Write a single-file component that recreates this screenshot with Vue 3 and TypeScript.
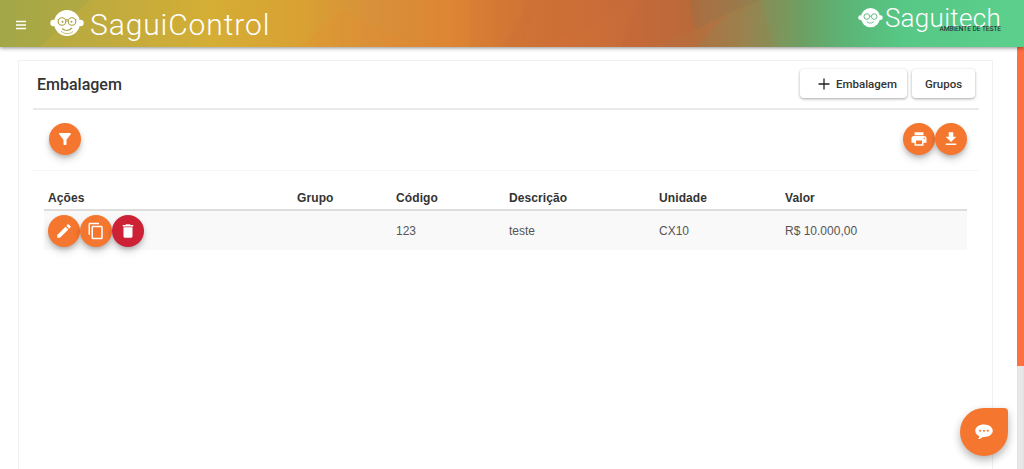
<script setup lang="ts">
const columns = ['Ações', 'Grupo', 'Código', 'Descrição', 'Unidade', 'Valor']
const row = { grupo: '', codigo: '123', descricao: 'teste', unidade: 'CX10', valor: 'R$ 10.000,00' }

// facets of the header background
const facets = [
  { points: '0,0 90,0 40,47 0,47', fill: '#7f9f4a', opacity: 0.12 },
  { points: '90,0 240,0 170,47 40,47', fill: '#e0b030', opacity: 0.08 },
  { points: '340,10 420,47 300,47', fill: '#e88a2a', opacity: 0.18 },
  { points: '470,0 540,0 520,47 470,47', fill: '#c86a3c', opacity: 0.1 },
  { points: '530,0 640,0 600,20 540,47 500,47', fill: '#c86a3c', opacity: 0.12 },
  { points: '600,20 610,47 540,47', fill: '#d07035', opacity: 0.18 },
  { points: '640,0 700,0 695,30 650,47 620,47', fill: '#b8633a', opacity: 0.14 },
  { points: '690,0 760,0 730,12 695,30', fill: '#85784e', opacity: 0.28 },
  { points: '695,30 730,12 695,47 650,47', fill: '#b07845', opacity: 0.2 },
  { points: '730,12 790,0 775,47 695,47', fill: '#8a8d55', opacity: 0.22 },
  { points: '760,0 800,0 800,47 775,47', fill: '#6f9e62', opacity: 0.25 },
]
</script>

<template>
  <div class="page">
    <header class="topbar">
      <svg class="facets" viewBox="0 0 1024 47" preserveAspectRatio="none">
        <polygon v-for="f in facets" :key="f.points" :points="f.points" :fill="f.fill" :opacity="f.opacity" />
      </svg>
      <button class="menu" aria-label="menu">
        <svg width="12" height="10" viewBox="0 0 12 10"><path d="M1 1.500h10M1 5h10M1 8.500h10" stroke="#fff" stroke-width="1.500" /></svg>
      </button>
      <svg class="monkey" width="34" height="27" viewBox="0 0 34 27">
        <circle cx="3.500" cy="13" r="3.200" fill="#fff" />
        <circle cx="30.500" cy="13" r="3.200" fill="#fff" />
        <circle cx="17" cy="13" r="13" fill="#fff" />
        <path d="M7.500 9.500h19M11 21c3 3.500 9 3.500 12 .5" fill="none" stroke="#b9ab3f" stroke-width=".8" />
        <circle cx="12" cy="11.500" r="3.800" fill="#fff" stroke="#a9a040" stroke-width="1.100" />
        <circle cx="22" cy="11.500" r="3.800" fill="#fff" stroke="#a9a040" stroke-width="1.100" />
        <circle cx="12.500" cy="11.800" r="1" fill="#a9a040" />
        <circle cx="21.500" cy="11.800" r="1" fill="#a9a040" />
        <path d="M15.800 11h2.400M12 18.500c3 2.500 7 2.500 10-.5" fill="none" stroke="#a9a040" stroke-width="1.200" />
      </svg>
      <span class="brand">SaguiControl</span>
      <div class="company">
        <svg width="25" height="20" viewBox="0 0 34 27">
          <circle cx="3.500" cy="13" r="3.200" fill="#fff" />
          <circle cx="30.500" cy="13" r="3.200" fill="#fff" />
          <circle cx="17" cy="13" r="13" fill="#fff" />
          <circle cx="12" cy="11.500" r="3.800" fill="#fff" stroke="#5cb97c" stroke-width="1.300" />
          <circle cx="22" cy="11.500" r="3.800" fill="#fff" stroke="#5cb97c" stroke-width="1.300" />
          <path d="M15.800 11h2.400M12 18.500c3 2.500 7 2.500 10-.5" fill="none" stroke="#5cb97c" stroke-width="1.300" />
        </svg>
        <span class="company-name">Saguitech</span>
        <span class="env">AMBIENTE DE TESTE</span>
      </div>
    </header>

    <div class="body">
      <main class="content">
        <section class="card">
          <div class="card-head">
            <h1>Embalagem</h1>
            <div class="head-actions">
              <button class="flat wide">
                <svg width="12" height="12" viewBox="0 0 12 12"><path d="M6 .5v11M.5 6h11" stroke="#222" stroke-width="1.300" /></svg>
                Embalagem
              </button>
              <button class="flat">Grupos</button>
            </div>
          </div>

          <div class="tools">
            <button class="fab" aria-label="filtro">
              <svg width="18" height="18" viewBox="0 0 24 24"><path d="M4.250 5.610C6.270 8.200 10 13 10 13v6c0 .55.45 1 1 1h2c.55 0 1-.45 1-1v-6s3.720-4.800 5.740-7.390A.998.998 0 0 0 18.950 4H5.040c-.83 0-1.300.95-.79 1.610z" fill="#fff" /></svg>
            </button>
            <div class="tools-right">
              <button class="fab" aria-label="imprimir">
                <svg width="18" height="18" viewBox="0 0 24 24"><path d="M19 8H5c-1.660 0-3 1.340-3 3v6h4v4h12v-4h4v-6c0-1.660-1.340-3-3-3zm-3 11H8v-5h8v5zm3-7c-.550 0-1-.450-1-1s.450-1 1-1 1 .450 1 1-.450 1-1 1zm-1-9H6v4h12V3z" fill="#fff" /></svg>
              </button>
              <button class="fab" aria-label="baixar">
                <svg width="18" height="18" viewBox="0 0 24 24"><path d="M19 9h-4V3H9v6H5l7 7 7-7zM5 18v2h14v-2H5z" fill="#fff" /></svg>
              </button>
            </div>
          </div>

          <div class="table">
            <div class="tr th">
              <span v-for="c in columns" :key="c">{{ c }}</span>
            </div>
            <div class="tr td">
              <span class="actions">
                <button class="fab" aria-label="editar">
                  <svg width="18" height="18" viewBox="0 0 24 24"><path d="M3 17.250V21h3.750L17.810 9.940l-3.750-3.750L3 17.250zM20.710 7.040a1 1 0 0 0 0-1.410l-2.340-2.340a1 1 0 0 0-1.410 0l-1.830 1.830 3.750 3.750 1.830-1.830z" fill="#fff" /></svg>
                </button>
                <button class="fab" aria-label="copiar">
                  <svg width="18" height="18" viewBox="0 0 24 24"><path d="M16 1H4c-1.100 0-2 .9-2 2v14h2V3h12V1zm3 4H8c-1.100 0-2 .9-2 2v14c0 1.100.9 2 2 2h11c1.100 0 2-.9 2-2V7c0-1.100-.9-2-2-2zm0 16H8V7h11v14z" fill="#fff" /></svg>
                </button>
                <button class="fab danger" aria-label="excluir">
                  <svg width="18" height="18" viewBox="0 0 24 24"><path d="M6 19c0 1.100.9 2 2 2h8c1.100 0 2-.9 2-2V7H6v12zM19 4h-3.500l-1-1h-5l-1 1H5v2h14V4z" fill="#fff" /></svg>
                </button>
              </span>
              <span>{{ row.grupo }}</span>
              <span>{{ row.codigo }}</span>
              <span>{{ row.descricao }}</span>
              <span>{{ row.unidade }}</span>
              <span>{{ row.valor }}</span>
            </div>
          </div>
        </section>
      </main>
      <div class="scrollbar"><div class="thumb"></div></div>
    </div>

    <button class="chat" aria-label="chat">
      <svg width="20" height="20" viewBox="0 0 24 24"><path d="M12 3C6 3 1.500 6.200 1.500 10.500c0 3 2 5.400 5 6.600-.2 1.300-1 2.600-2 3.400 2.300 0 4.500-1 6-2.600h1.500c6 0 10.500-3.200 10.500-7.400S18 3 12 3z" fill="#fff" /><circle cx="7.500" cy="10.500" r="1.300" fill="#f5762f" /><circle cx="12" cy="10.500" r="1.300" fill="#f5762f" /><circle cx="16.500" cy="10.500" r="1.300" fill="#f5762f" /></svg>
    </button>
  </div>
</template>

<style>
html, body { margin: 0; overflow: hidden; background: #fff; }
</style>

<style scoped>
.page { height: 469px; display: flex; flex-direction: column; font-family: Roboto, "Liberation Sans", sans-serif; color: #333; overflow: hidden; }
button { border: none; padding: 0; cursor: pointer; font-family: inherit; }

.topbar {
  position: relative; z-index: 2; flex: 0 0 47px; height: 47px; display: flex; align-items: center;
  background: linear-gradient(90deg, #a9a948 0, #c0ab3e 120px, #d4ae35 210px, #d9a133 300px, #d8913a 370px, #dd8533 450px, #cf7236 540px, #c66a3a 640px, #bb6a3a 690px, #a57a48 735px, #8a8d55 770px, #6f9e62 800px, #5cb274 840px, #57c785 900px, #5bd08c 1024px);
  box-shadow: 0 1px 4px rgba(0, 0, 0, .45);
}
.facets { position: absolute; inset: 0; width: 100%; height: 100%; }
.menu { position: relative; width: 12px; height: 10px; margin: 2px 0 0 15px; background: none; display: flex; }
.monkey { position: relative; margin: 0 0 0 23px; }
.brand { position: relative; margin: 2px 0 0 6px; font-family: Roboto, sans-serif; font-weight: 300; font-size: 30px; letter-spacing: .9px; color: #fff; line-height: 46px; }
.company { position: relative; margin: -12px 23px 0 auto; display: flex; align-items: center; gap: 2px; }
.company-name { font-family: Roboto, sans-serif; font-weight: 300; font-size: 26px; line-height: 28px; color: #fff; letter-spacing: .3px; }
.env { position: absolute; right: 0; top: 21px; font-size: 6.500px; line-height: 9px; color: #222; white-space: nowrap; }

.body { flex: 1; display: flex; min-height: 0; }
.content { flex: 1; min-width: 0; padding: 13px 24px 0 18px; }
.scrollbar { flex: 0 0 5px; background: #e8e8e8; border-left: 1px solid #f3dcd6; border-right: 1px solid #f3dcd6; position: relative; }
.thumb { position: absolute; left: -1px; right: -1px; top: 0; height: 319px; background: #ff7043; }

.card { height: 100%; box-sizing: border-box; border: 1px solid #f1f1f1; border-bottom: none; padding: 0 13px 0 14px; }
.card-head { height: 47px; display: flex; align-items: center; justify-content: space-between; border-bottom: 2px solid #eaeaea; }
.card-head h1 { margin: 0 0 0 4px; font-size: 16px; font-weight: 500; color: #333; }
.head-actions { display: flex; gap: 5px; margin: 0 4px 2px 0; }
.flat { height: 29px; width: 63px; border-radius: 4px; background: #fff; font-size: 11.500px; font-weight: 500; color: #333; box-shadow: 0 1px 3px rgba(0, 0, 0, .35); }
.flat.wide { width: 107px; display: flex; align-items: center; gap: 6px; padding-left: 18px; }

.tools { height: 57px; padding: 0 12px 3px 16px; display: flex; align-items: center; justify-content: space-between; border-bottom: 1px solid #f5f5f5; }
.tools-right { display: flex; }
.fab { width: 32px; height: 32px; border-radius: 50%; background: #f5762f; display: flex; align-items: center; justify-content: center; box-shadow: 0 3px 5px -1px rgba(0, 0, 0, .25), 0 5px 8px rgba(0, 0, 0, .12); }
.fab.danger { background: #cd2136; }

.table { margin: 14px 12px 0 11px; font-family: "Liberation Sans", Arial, sans-serif; font-size: 12px; }
.tr { display: grid; grid-template-columns: 249px 99px 113px 150px 126px 1fr; padding-left: 4px; align-items: center; }
.th { height: 23px; padding-top: 1px; font-weight: 700; color: #333; letter-spacing: .1px; border-bottom: 2px solid #ddd; }
.td { height: 39px; background: #f9f9f9; color: #555; }
.actions { display: flex; }

.chat { position: fixed; right: 16px; bottom: 13px; width: 48px; height: 48px; border-radius: 50% 4px 50% 50%; background: #f5762f; display: flex; align-items: center; justify-content: center; box-shadow: 0 4px 8px rgba(0, 0, 0, .3); }
</style>
